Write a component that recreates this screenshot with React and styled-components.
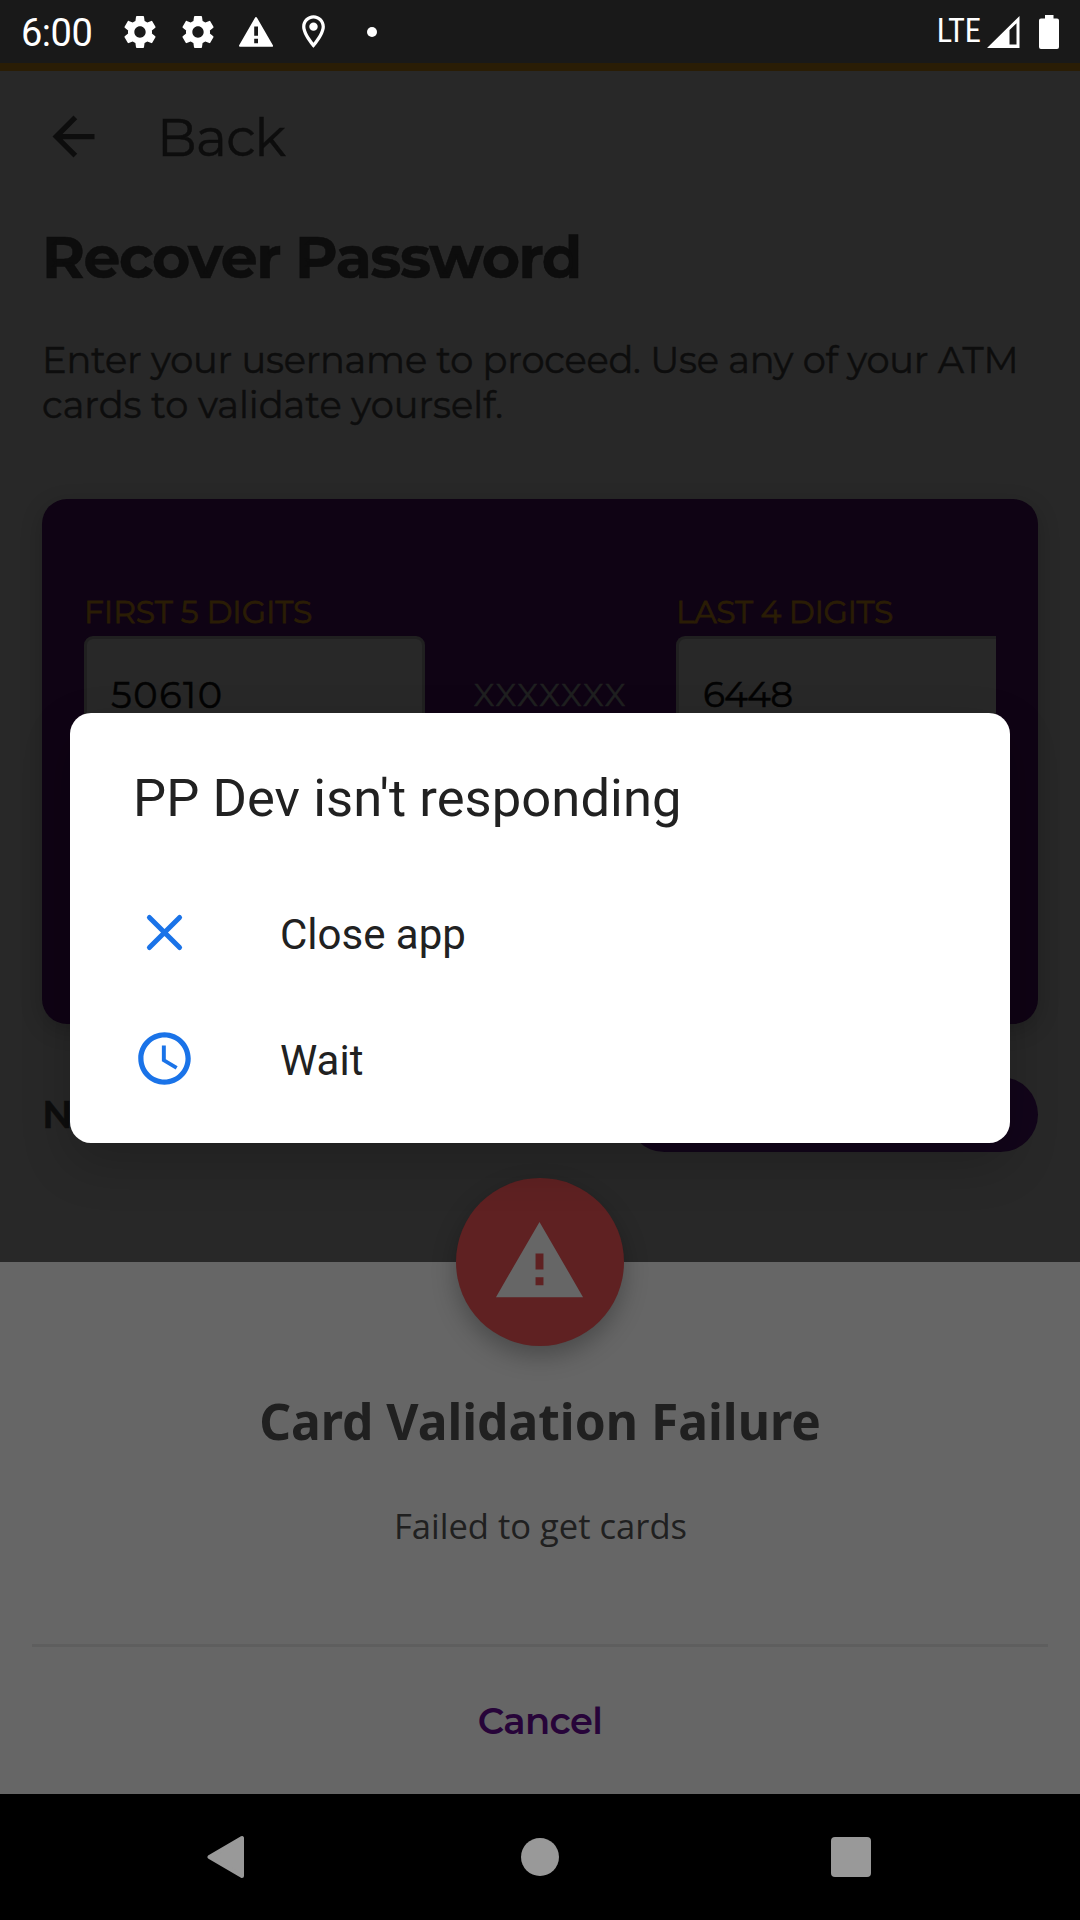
import React from 'react';
import styled, { createGlobalStyle } from 'styled-components';

const sans = 'Montserrat, Inter, "Open Sans", sans-serif';
const noto = '"Noto Sans", "Open Sans", sans-serif';
const roboto = 'Roboto, "Liberation Sans", sans-serif';

const GlobalStyle = createGlobalStyle`
  * { box-sizing: border-box; }
  body { margin: 0; background: #000; }
  h1, h2, p { margin: 0; font-weight: 400; }
  button { border: 0; padding: 0; background: none; font: inherit; color: inherit; text-align: left; }
  svg { display: block; flex: none; }
`;

const Screen = styled.main`
  position: relative;
  display: flex;
  flex-direction: column;
  width: 1080px;
  height: 1920px;
  overflow: hidden;
  background: #282828;
  font-family: ${sans};
`;

/* ---- status bar ---- */
const StatusBar = styled.header`
  flex: none;
  display: flex;
  align-items: center;
  height: 71px;
  padding: 0 21px;
  background: #191919;
  border-bottom: 8px solid #2a1d05;
  color: #fff;
  font-family: ${roboto};
`;

const Clock = styled.span`
  width: 99px;
  font-size: 38px;
  line-height: 40px;
  letter-spacing: -0.5px;
  padding-top: 3px;
`;

const Notifications = styled.div`
  display: flex;
  align-items: center;
  gap: 18px;
`;

const Dot = styled.i`
  width: 10px;
  height: 10px;
  margin-left: 16px;
  border-radius: 50%;
  background: #fff;
`;

const Signals = styled.div`
  display: flex;
  align-items: center;
  margin-left: auto;
`;

const Network = styled.span`
  margin-right: 6px;
  font-stretch: 75%;
  font-size: 32.5px;
  line-height: 36px;
  padding-bottom: 2px;
`;

const Battery = styled.svg`
  margin-left: 19px;
`;

/* ---- page under the dialog ---- */
const Page = styled.section`
  flex: none;
  height: 1191px;
  padding: 0 42px;
  overflow: hidden;
  color: #0d0d0d;
  -webkit-text-stroke: 0.5px;
`;

const Toolbar = styled.nav`
  display: flex;
  align-items: center;
  gap: 52px;
  height: 131px;
  font-size: 52.5px;
  line-height: 60px;
  letter-spacing: -0.7px;
`;

const Heading = styled.h1`
  margin-top: 21px;
  font-size: 58.5px;
  font-weight: 700;
  line-height: 68px;
  letter-spacing: -1.4px;
  white-space: nowrap;
`;

const Intro = styled.p`
  display: flex;
  flex-direction: column;
  margin-top: 46px;
  font-size: 36.75px;
  line-height: 45px;
  white-space: nowrap;
`;

const IntroLine = styled.span`
  letter-spacing: ${(p) => p.$tracking || 0}px;
`;

const BankCard = styled.div`
  display: grid;
  grid-template-columns: 341px 251px 320px;
  align-items: start;
  height: 525px;
  margin-top: 72px;
  padding: 97px 42px 0;
  border-radius: 25px;
  background: #0f0314;
  box-shadow: 0 6px 22px rgba(0, 0, 0, 0.2);
`;

const Field = styled.label`
  display: flex;
  flex-direction: column;
  gap: 8px;
`;

const FieldLabel = styled.span`
  font-size: 31.5px;
  line-height: 32px;
  letter-spacing: ${(p) => p.$tracking || 0}px;
  color: #2a1d05;
  -webkit-text-stroke-width: 0.8px;
  white-space: nowrap;
`;

const FieldBox = styled.span`
  display: flex;
  align-items: center;
  width: 100%;
  height: 118px;
  padding: 0 0 2px 24px;
  border: 3px solid #202020;
  border-right-width: ${(p) => (p.$cut ? 0 : 3)}px;
  border-radius: ${(p) => (p.$cut ? '9px 0 0 9px' : '9px')};
  background: #282828;
  color: #030303;
  font-size: ${(p) => (p.$cut ? 36 : 36.75)}px;
  letter-spacing: ${(p) => p.$tracking || 0}px;
`;

const Mask = styled.span`
  display: flex;
  align-items: center;
  justify-content: center;
  height: 118px;
  margin-top: 40px;
  color: #1f2020;
  font-size: 31.5px;
  letter-spacing: 1.9px;
`;

const Actions = styled.div`
  display: flex;
  align-items: center;
  justify-content: space-between;
  height: 75px;
  margin-top: 53px;
`;

const HelpText = styled.span`
  font-size: 38px;
  font-weight: 600;
  line-height: 44px;
`;

const Pill = styled.button`
  width: 411px;
  height: 75px;
  border-radius: 38px;
  background: #12051a;
`;

/* ---- bottom sheet ---- */
const Sheet = styled.section`
  flex: none;
  display: flex;
  flex-direction: column;
  align-items: center;
  height: 532px;
  padding: 0 32px;
  background: #666;
  color: #202020;
  font-family: ${noto};
`;

const AlertBadge = styled.div`
  position: relative;
  flex: none;
  display: flex;
  align-items: center;
  justify-content: center;
  width: 168px;
  height: 168px;
  margin-top: -84px;
  padding: 0 2px 1px 0;
  border-radius: 50%;
  background: #5f2122;
  color: #666;
  box-shadow: 0 10px 24px rgba(0, 0, 0, 0.28);
`;

const SheetTitle = styled.h2`
  margin-top: 41px;
  font-size: 49.7px;
  font-weight: 700;
  line-height: 68px;
`;

const SheetText = styled.p`
  margin-top: 47px;
  padding-left: 1px;
  font-family: "Open Sans", ${noto};
  font-size: 34.6px;
  line-height: 48px;
`;

const Cancel = styled.button`
  align-self: stretch;
  height: 150px;
  margin-top: auto;
  border-top: 3px solid #5e5e5e;
  color: #270439;
  font-family: ${sans};
  font-size: 36.75px;
  font-weight: 600;
  letter-spacing: -0.65px;
  text-align: center;
`;

/* ---- navigation bar ---- */
const NavBar = styled.footer`
  flex: none;
  display: flex;
  align-items: center;
  justify-content: center;
  gap: 267px;
  height: 126px;
  background: #000;
  color: #999;
`;

/* ---- system dialog ---- */
const Dialog = styled.section`
  position: absolute;
  top: 713px;
  left: 70px;
  width: 940px;
  height: 430px;
  padding: 51px 62px 0;
  border-radius: 21px;
  background: #fff;
  box-shadow: 0 20px 50px rgba(0, 0, 0, 0.2);
  color: #212121;
  font-family: ${roboto};
`;

const DialogTitle = styled.h2`
  margin-bottom: 39px;
  padding-left: 1px;
  font-size: 52.5px;
  line-height: 69px;
  letter-spacing: 0.08px;
`;

const DialogAction = styled.button`
  display: flex;
  align-items: center;
  gap: 84px;
  width: 100%;
  height: 126px;
  padding-left: 1px;
  font-size: 42px;
  line-height: 50px;

  svg {
    margin-bottom: 5px;
    color: #1a73e8;
  }
`;

const Icon = ({ size, children }) => (
  <svg width={size} height={size} viewBox="0 0 24 24" fill="currentColor">{children}</svg>
);

const Gear = () => (
  <Icon size={40}>
    <path d="M19.14 12.94c.04-.3.06-.61.06-.94 0-.32-.02-.64-.07-.94l2.03-1.58a.49.49 0 0 0 .12-.61l-1.92-3.32a.488.488 0 0 0-.59-.22l-2.39.96c-.5-.38-1.03-.7-1.62-.94L14.4 2.81a.484.484 0 0 0-.48-.41h-3.84c-.24 0-.43.17-.47.41l-.36 2.54c-.59.24-1.13.57-1.62.94l-2.39-.96c-.22-.08-.47 0-.59.22L2.74 8.87c-.12.21-.08.47.12.61l2.03 1.58c-.05.3-.09.63-.09.94s.02.64.07.94l-2.03 1.58a.49.49 0 0 0-.12.61l1.92 3.32c.12.22.37.29.59.22l2.39-.96c.5.38 1.03.7 1.62.94l.36 2.54c.05.24.24.41.48.41h3.84c.24 0 .44-.17.47-.41l.36-2.54c.59-.24 1.13-.56 1.62-.94l2.39.96c.22.08.47 0 .59-.22l1.92-3.32c.12-.22.07-.47-.12-.61l-2.01-1.58zM12 15.4c-1.870 0-3.400-1.530-3.400-3.400s1.530-3.400 3.400-3.400 3.400 1.530 3.400 3.400-1.530 3.400-3.400 3.400z" />
  </Icon>
);

export default function App() {
  return (
    <>
      <GlobalStyle />
      <Screen>
        <StatusBar>
          <Clock>6:00</Clock>
          <Notifications>
            <Gear />
            <Gear />
            <svg width="40" height="40" viewBox="0 0 40 40">
              <path d="M20 6L36 33.8H4z" fill="#fff" stroke="#fff" strokeWidth="2" strokeLinejoin="round" />
              <path d="M18.2 14.5h3.8v9.3h-3.8zM18.2 26.8h3.8v4.4h-3.8z" fill="#191919" />
            </svg>
            <Icon size={39}>
              <path d="M12 2C8.13 2 5 5.13 5 9c0 5.25 7 13 7 13s7-7.75 7-13c0-3.87-3.13-7-7-7zM7 9c0-2.76 2.24-5 5-5s5 2.24 5 5c0 2.88-2.88 7.19-5 9.88C9.92 16.21 7 11.85 7 9z" />
              <circle cx="12" cy="9" r="2.6" />
            </Icon>
            <Dot />
          </Notifications>
          <Signals>
            <Network>LTE</Network>
            <svg width="33" height="32" viewBox="0 0 33 32" fill="#fff">
              <path fillRule="evenodd" d="M0 32L32.5 0V32zM22.5 14V28.5H29.5V7.3z" />
            </svg>
            <Battery width="20" height="34" viewBox="0 0 20 34" fill="#fff">
              <path d="M6 0h8.500v3.500H18a2 2 0 0 1 2 2V32a2 2 0 0 1-2 2H2a2 2 0 0 1-2-2V5.500a2 2 0 0 1 2-2h4z" />
            </Battery>
          </Signals>
        </StatusBar>

        <Page>
          <Toolbar>
            <Icon size={63}>
              <path d="M20 11H7.830l5.590-5.590L12 4l-8 8 8 8 1.410-1.410L7.830 13H20v-2z" />
            </Icon>
            <span>Back</span>
          </Toolbar>
          <Heading>Recover Password</Heading>
          <Intro>
            <IntroLine $tracking={-0.2}>Enter your username to proceed. Use any of your ATM </IntroLine>
            <IntroLine>cards to validate yourself.</IntroLine>
          </Intro>
          <BankCard>
            <Field>
              <FieldLabel $tracking={-0.15}>FIRST 5 DIGITS</FieldLabel>
              <FieldBox $tracking={1.5}>50610</FieldBox>
            </Field>
            <Mask>XXXXXXX</Mask>
            <Field>
              <FieldLabel $tracking={-0.4}>LAST 4 DIGITS</FieldLabel>
              <FieldBox $tracking={-0.9} $cut>6448</FieldBox>
            </Field>
          </BankCard>
          <Actions>
            <HelpText>N</HelpText>
            <Pill />
          </Actions>
        </Page>

        <Sheet>
          <AlertBadge>
            <Icon size={95}>
              <path d="M1 21h22L12 2 1 21zm12-3h-2v-2h2v2zm0-4h-2v-4h2v4z" />
            </Icon>
          </AlertBadge>
          <SheetTitle>Card Validation Failure</SheetTitle>
          <SheetText>Failed to get cards</SheetText>
          <Cancel>Cancel</Cancel>
        </Sheet>

        <NavBar>
          <svg width="46" height="46" viewBox="0 0 46 46">
            <path d="M2.500 23L35 4V42z" fill="currentColor" stroke="currentColor" strokeWidth="4" strokeLinejoin="round" />
          </svg>
          <svg width="40" height="40" viewBox="0 0 40 40">
            <circle cx="20" cy="20" r="19" fill="currentColor" />
          </svg>
          <svg width="46" height="46" viewBox="0 0 46 46">
            <rect x="4" y="3" width="40" height="40" rx="4" fill="currentColor" />
          </svg>
        </NavBar>

        <Dialog>
          <DialogTitle>PP Dev isn't responding</DialogTitle>
          <DialogAction>
            <svg width="63" height="63" viewBox="0 0 24 24" stroke="currentColor" strokeWidth="1.9" strokeLinecap="round">
              <path d="M6.250 6.250l11.500 11.500M17.750 6.250L6.250 17.750" />
            </svg>
            Close app
          </DialogAction>
          <DialogAction>
            <Icon size={63}>
              <path d="M11.990 2C6.470 2 2 6.480 2 12s4.470 10 9.990 10C17.520 22 22 17.520 22 12S17.520 2 11.990 2zM12 20c-4.420 0-8-3.580-8-8s3.580-8 8-8 8 3.580 8 8-3.580 8-8 8z" />
              <path d="M12.500 7H11v6l5.250 3.150.750-1.230-4.500-2.670z" />
            </Icon>
            Wait
          </DialogAction>
        </Dialog>
      </Screen>
    </>
  );
}
